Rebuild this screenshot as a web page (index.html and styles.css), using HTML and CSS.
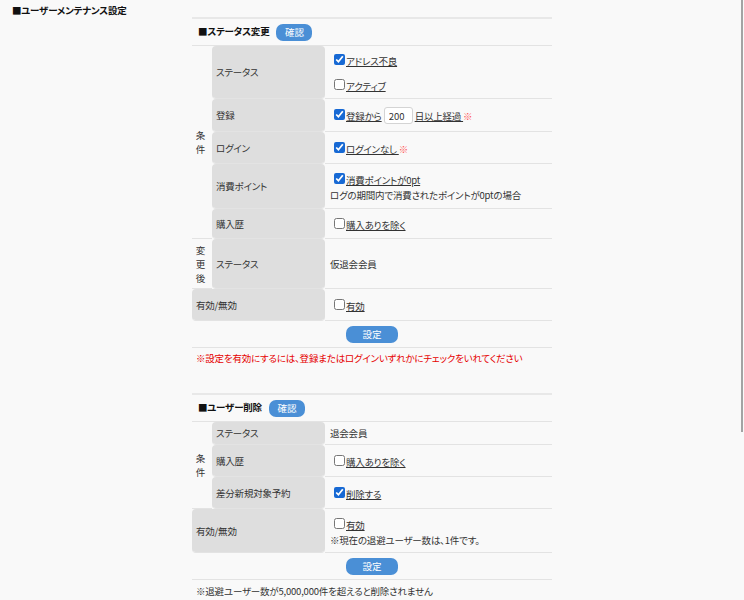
FILE: index.html
```html
<!DOCTYPE html>
<html lang="ja">
<head>
  <meta charset="UTF-8">
  <title>ユーザーメンテナンス設定</title>
  <link rel="stylesheet" href="styles.css">
</head>
<body>

  <h1 class="page-title">■ユーザーメンテナンス設定</h1>

  <!-- ステータス変更 -->
  <section class="block">
    <table class="form-table">
      <colgroup>
        <col class="c-group">
        <col class="c-label">
        <col>
      </colgroup>
      <tr class="head-row">
        <td colspan="3"><span class="block-title">■ステータス変更</span><button class="btn" type="button">確認</button></td>
      </tr>
      <tr class="h53">
        <td class="group" rowspan="5">条<br>件</td>
        <th>ステータス</th>
        <td>
          <div class="opt"><input type="checkbox" id="st-address" checked><label for="st-address">アドレス不良</label></div>
          <div class="opt opt-gap"><input type="checkbox" id="st-active"><label for="st-active">アクティブ</label></div>
        </td>
      </tr>
      <tr class="h33">
        <th>登録</th>
        <td>
          <div class="opt"><input type="checkbox" id="cond-reg" checked><label for="cond-reg">登録から</label><input class="num" type="text" value="200"><label for="cond-reg">日以上経過 </label><span class="req">※</span></div>
        </td>
      </tr>
      <tr class="h32">
        <th>ログイン</th>
        <td>
          <div class="opt"><input type="checkbox" id="cond-login" checked><label for="cond-login">ログインなし </label><span class="req">※</span></div>
        </td>
      </tr>
      <tr class="h45">
        <th>消費ポイント</th>
        <td>
          <div class="opt"><input type="checkbox" id="cond-point" checked><label for="cond-point">消費ポイントが0pt</label></div>
          <div class="sub">ログの期間内で消費されたポイントが0ptの場合</div>
        </td>
      </tr>
      <tr class="h30">
        <th>購入歴</th>
        <td>
          <div class="opt"><input type="checkbox" id="cond-buy"><label for="cond-buy">購入ありを除く</label></div>
        </td>
      </tr>
      <tr class="h50">
        <td class="group">変<br>更<br>後</td>
        <th>ステータス</th>
        <td>仮退会会員</td>
      </tr>
      <tr class="h32">
        <th colspan="2">有効/無効</th>
        <td>
          <div class="opt"><input type="checkbox" id="st-enable"><label for="st-enable">有効</label></div>
        </td>
      </tr>
      <tr class="head-row">
        <td class="actions" colspan="3"><button class="btn btn-wide" type="button">設定</button></td>
      </tr>
    </table>
    <p class="note note-red">※設定を有効にするには、登録またはログインいずれかにチェックをいれてください</p>
  </section>

  <!-- ユーザー削除 -->
  <section class="block block-delete">
    <table class="form-table">
      <colgroup>
        <col class="c-group">
        <col class="c-label">
        <col>
      </colgroup>
      <tr class="head-row">
        <td colspan="3"><span class="block-title">■ユーザー削除</span><button class="btn" type="button">確認</button></td>
      </tr>
      <tr class="h23">
        <td class="group" rowspan="3">条<br>件</td>
        <th>ステータス</th>
        <td>退会会員</td>
      </tr>
      <tr class="h32">
        <th>購入歴</th>
        <td>
          <div class="opt"><input type="checkbox" id="del-buy"><label for="del-buy">購入ありを除く</label></div>
        </td>
      </tr>
      <tr class="h32">
        <th>差分新規対象予約</th>
        <td>
          <div class="opt"><input type="checkbox" id="del-reserve" checked><label for="del-reserve">削除する</label></div>
        </td>
      </tr>
      <tr class="h44">
        <th colspan="2">有効/無効</th>
        <td>
          <div class="opt"><input type="checkbox" id="del-enable"><label for="del-enable">有効</label></div>
          <div class="sub">※現在の退避ユーザー数は、1件です。</div>
        </td>
      </tr>
      <tr class="head-row">
        <td class="actions" colspan="3"><button class="btn btn-wide" type="button">設定</button></td>
      </tr>
    </table>
    <p class="note">※退避ユーザー数が5,000,000件を超えると削除されません</p>
  </section>

  <div class="scroll-thumb"></div>

</body>
</html>
```

FILE: styles.css
```css
* {
  margin: 0;
  padding: 0;
  box-sizing: border-box;
}

body {
  font-family: "Noto Sans CJK JP", "Noto Sans", sans-serif;
  font-size: 9.5px;
  font-feature-settings: "palt";
  letter-spacing: -0.2px;
  color: #333;
  background: #f9f9f9;
}

.page-title {
  font-size: 9.5px;
  font-weight: bold;
  color: #111;
  line-height: 14px;
  padding: 3px 0 0 12px;
}

.block {
  width: 360px;
  margin: 0 auto;
  border-top: 2px solid #e8e8e8;
}

.block-delete {
  margin-top: 25px;
}

.form-table {
  width: 100%;
  border-collapse: separate;
  border-spacing: 0;
  table-layout: fixed;
}

.c-group {
  width: 20px;
}

.c-label {
  width: 113px;
}

.form-table th,
.form-table td {
  border-bottom: 1px solid #e3e3e3;
  padding: 0 4px 0 5px;
  vertical-align: middle;
  text-align: left;
  font-weight: normal;
  line-height: 14px;
}

.form-table th {
  padding-left: 4px;
  background: #dedede;
  background-clip: padding-box;
  border-radius: 4px;
}

.form-table td.group {
  padding: 0 3px 0 0;
  text-align: center;
}

.head-row { height: 27px; }
.h23 { height: 23px; }
.h30 { height: 30px; }
.h32 { height: 32px; }
.h33 { height: 33px; }
.h44 { height: 44px; }
.h45 { height: 45px; }
.h50 { height: 50px; }
.h53 { height: 53px; }

.head-row td {
  padding-left: 6px;
}

.block-title {
  font-weight: bold;
  color: #111;
}

.btn {
  font-family: inherit;
  font-size: 9.5px;
  font-feature-settings: "palt";
  background: #4a8fd6;
  color: #fff;
  border: none;
  border-radius: 7px;
  width: 36px;
  height: 17px;
  margin-left: 7px;
  vertical-align: middle;
}

.head-row td.actions {
  padding: 0;
  text-align: center;
}

.btn-wide {
  width: 52px;
  margin-left: 0;
}

.opt input[type="checkbox"] {
  width: 11px;
  height: 11px;
  margin: 3px 1px 4px 4px;
  accent-color: #1769d4;
}

.opt label {
  text-decoration: underline;
}

.opt-gap {
  margin-top: 7px;
}

.num {
  font-family: inherit;
  font-size: 9.5px;
  color: #333;
  width: 29px;
  height: 17px;
  padding: 0 4px;
  margin: 0 2px;
  border: 1px solid #d4d4d4;
  border-radius: 3px;
  background: #fff;
}

.req {
  color: #f55;
}

.note {
  padding: 3px 4px;
  line-height: 14px;
}

.block-delete .note {
  padding-top: 4px;
}

.note-red {
  color: #e60000;
}

.scroll-thumb {
  position: fixed;
  top: 0;
  right: 1px;
  width: 2px;
  height: 432px;
  background: #a3a3a3;
}
```
